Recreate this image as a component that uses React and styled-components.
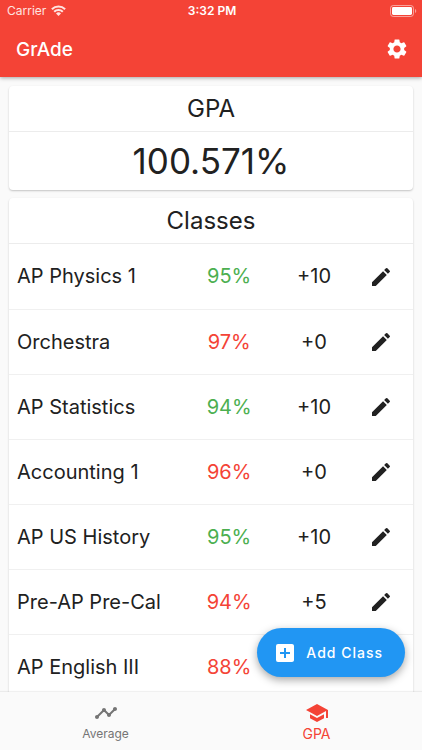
import { MdAddBox, MdEdit, MdSchool, MdSettings, MdTimeline } from 'react-icons/md'
import styled, { createGlobalStyle } from 'styled-components'

const classes = [
  { name: 'AP Physics 1', grade: '95%', bonus: '+10', passing: true },
  { name: 'Orchestra', grade: '97%', bonus: '+0', passing: false },
  { name: 'AP Statistics', grade: '94%', bonus: '+10', passing: true },
  { name: 'Accounting 1', grade: '96%', bonus: '+0', passing: false },
  { name: 'AP US History', grade: '95%', bonus: '+10', passing: true },
  { name: 'Pre-AP Pre-Cal', grade: '94%', bonus: '+5', passing: false },
  { name: 'AP English III', grade: '88%', bonus: '', passing: false },
]

const WifiIcon = () => (
  <svg width='15' height='11' viewBox='0 0 15 11' aria-hidden='true'>
    <g fill='none' stroke='currentColor' strokeWidth='2.1'>
      <path d='M0.9 4.2a9.4 9.4 0 0 1 13.2 0' />
      <path d='M3.2 6.8a6.1 6.1 0 0 1 8.6 0' />
    </g>
    <path d='M7.5 11 5 8.5a3.6 3.6 0 0 1 5 0z' fill='currentColor' />
  </svg>
)

const BatteryIcon = () => (
  <svg width='27' height='12' viewBox='0 0 27 12' aria-hidden='true'>
    <rect
      x='0.5'
      y='0.5'
      width='23'
      height='11'
      rx='2.8'
      fill='none'
      stroke='currentColor'
      strokeOpacity='0.5'
    />
    <rect x='2' y='2' width='20' height='8' rx='1.4' fill='currentColor' />
    <path d='M25 4v4a2.2 2.2 0 0 0 0-4z' fill='currentColor' fillOpacity='0.5' />
  </svg>
)

const App = () => {
  return (
    <Wrapper>
      <GlobalStyle />
      <Header>
        <StatusBar>
          <Carrier>
            Carrier <WifiIcon />
          </Carrier>
          <Clock>3:32 PM</Clock>
          <Battery>
            <BatteryIcon />
          </Battery>
        </StatusBar>
        <AppBar>
          <h1>GrAde</h1>
          <IconButton type='button' aria-label='Settings'>
            <MdSettings size={24} />
          </IconButton>
        </AppBar>
      </Header>

      <Body>
        <Content>
          <Card>
            <CardTitle>GPA</CardTitle>
            <Score>100.571%</Score>
          </Card>
          <Card>
            <CardTitle id='classes-title'>Classes</CardTitle>
            <ClassTable aria-labelledby='classes-title'>
              <tbody>
                {classes.map(({ name, grade, bonus, passing }) => (
                  <tr key={name}>
                    <NameCell scope='row'>{name}</NameCell>
                    <GradeCell $passing={passing}>{grade}</GradeCell>
                    <BonusCell>{bonus}</BonusCell>
                    <EditCell>
                      <IconButton type='button' aria-label={`Edit ${name}`}>
                        <MdEdit size={24} />
                      </IconButton>
                    </EditCell>
                  </tr>
                ))}
              </tbody>
            </ClassTable>
          </Card>
        </Content>
        <AddButton type='button'>
          <MdAddBox size={24} />
          Add Class
        </AddButton>
      </Body>

      <BottomNav>
        <NavLink href='#average'>
          <MdTimeline size={24} />
          Average
        </NavLink>
        <NavLink href='#gpa' $active aria-current='page'>
          <MdSchool size={24} />
          GPA
        </NavLink>
      </BottomNav>
    </Wrapper>
  )
}

const GlobalStyle = createGlobalStyle`
  *, *::before, *::after {
    box-sizing: border-box;
  }
  body {
    margin: 0;
    background: #fafafa;
    color: #212121;
    font-family: Inter, Roboto, 'Liberation Sans', sans-serif;
  }
  h1, h2, p {
    margin: 0;
    font-weight: 400;
  }
  button {
    font-family: inherit;
    border: 0;
    padding: 0;
    cursor: pointer;
  }
  svg {
    display: block;
    flex: none;
  }
`

const Wrapper = styled.div`
  height: 100vh;
  display: flex;
  flex-direction: column;
`

const Header = styled.header`
  z-index: 1;
  background: #f44336;
  color: #fff;
  box-shadow: 0 1px 4px rgba(0, 0, 0, 0.35);
`

const StatusBar = styled.div`
  display: grid;
  grid-template-columns: 1fr auto 1fr;
  align-items: center;
  height: 21px;
  padding: 0 5px 0 7px;
  font-size: 12px;
`

const Carrier = styled.span`
  display: flex;
  align-items: center;
  gap: 5px;
  color: #ffe3e0;
`

const Clock = styled.span`
  font-weight: 600;
`

const Battery = styled.span`
  justify-self: end;
`

const AppBar = styled.div`
  display: flex;
  align-items: center;
  justify-content: space-between;
  height: 56px;
  padding: 0 12px 0 16px;
  h1 {
    font-size: 19px;
    font-weight: 500;
  }
`

const IconButton = styled.button`
  display: inline-flex;
  padding: 1px;
  background: none;
  color: inherit;
`

const Body = styled.main`
  flex: 1;
  min-height: 0;
  position: relative;
`

const Content = styled.div`
  height: 100%;
  overflow-y: auto;
  scrollbar-width: none;
  display: flex;
  flex-direction: column;
  gap: 8px;
  padding: 9px 9px 0;
`

const Card = styled.section`
  flex: none;
  background: #fff;
  border-radius: 4px;
  box-shadow: 0 1px 2px rgba(0, 0, 0, 0.22);
`

const CardTitle = styled.h2`
  height: 46px;
  line-height: 46px;
  border-bottom: 1px solid #ececec;
  font-size: 24px;
  text-align: center;
`

const Score = styled.p`
  line-height: 58px;
  font-size: 35px;
  text-align: center;
`

const ClassTable = styled.table`
  width: 100%;
  table-layout: fixed;
  border-collapse: collapse;
  font-size: 20px;
  th,
  td {
    height: 65px;
    padding: 0;
    border-bottom: 1px solid #f0f0f0;
    font-weight: 400;
    text-align: center;
  }
`

const NameCell = styled.th`
  width: 42%;
  && {
    padding-left: 8px;
    text-align: left;
    white-space: nowrap;
  }
`

const GradeCell = styled.td`
  width: 25%;
  color: ${({ $passing }) => ($passing ? '#4caf50' : '#f44336')};
`

const BonusCell = styled.td`
  width: 17%;
`

const EditCell = styled.td`
  width: 16%;
  button {
    vertical-align: middle;
  }
`

const AddButton = styled.button`
  position: absolute;
  right: 17px;
  bottom: 15px;
  display: flex;
  align-items: center;
  gap: 9px;
  height: 49px;
  && {
    padding: 0 22px 0 16px;
  }
  border-radius: 25px;
  background: #2196f3;
  color: #fff;
  font-size: 14px;
  font-weight: 500;
  letter-spacing: 1px;
  box-shadow: 0 3px 8px rgba(0, 0, 0, 0.35);
`

const BottomNav = styled.nav`
  z-index: 1;
  display: flex;
  height: 58px;
  background: #fafafa;
  box-shadow: 0 -1px 1px rgba(0, 0, 0, 0.06);
`

const NavLink = styled.a`
  flex: 1;
  display: flex;
  flex-direction: column;
  align-items: center;
  justify-content: center;
  padding-top: 2px;
  color: ${({ $active }) => ($active ? '#f44336' : '#757575')};
  font-size: ${({ $active }) => ($active ? '14px' : '12px')};
  line-height: 18px;
  text-decoration: none;
`

export default App
